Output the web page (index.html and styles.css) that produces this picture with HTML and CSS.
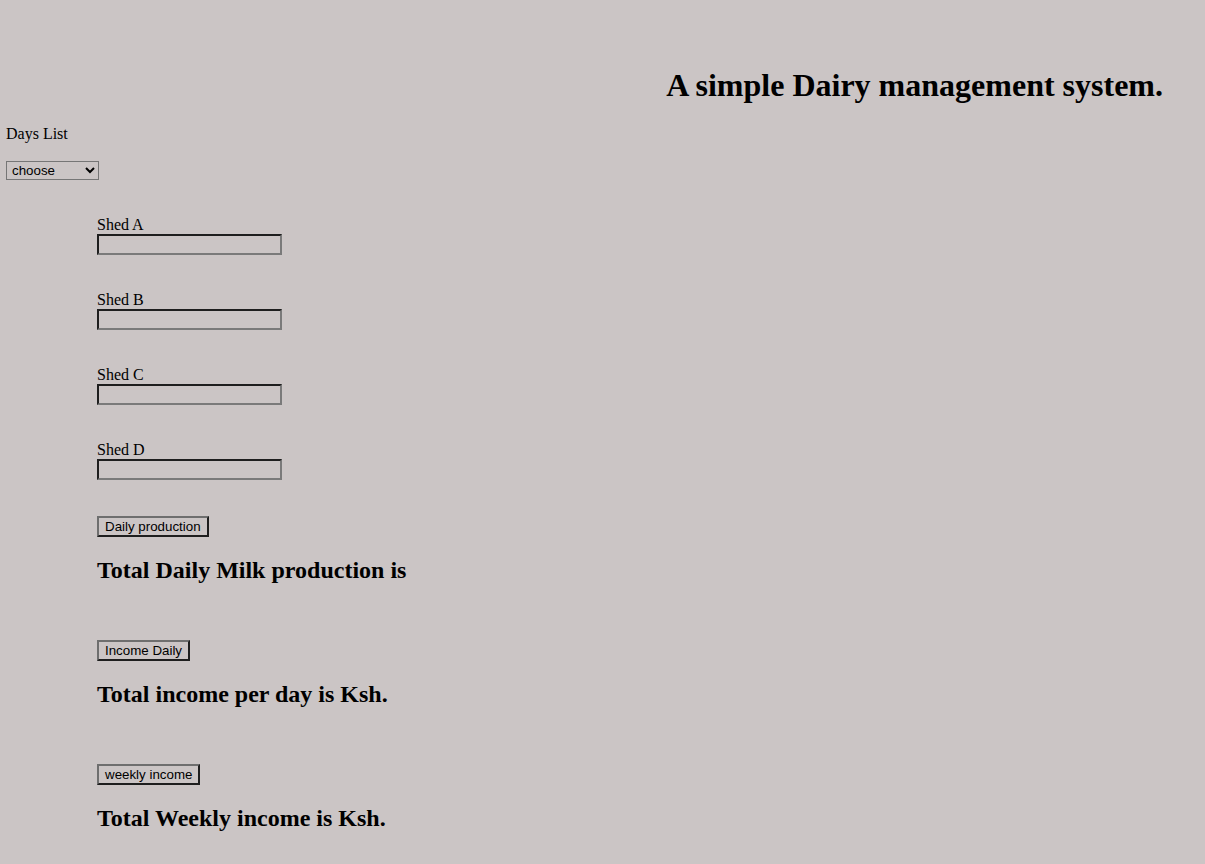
FILE: index.html
```html
<!DOCTYPE html>
<html>
<head>
<meta charset="utf-8">
<title>Dairy management</title>
<link rel="stylesheet" href="styles.css">
</head>
<body>
<header class="header">
  <h1 class="title">A simple Dairy management system.</h1>
</header>
<main class="main">
  <p class="days-label">Days List</p>
  <select class="days-select">
    <option>choose</option>
    <option>Monday</option>
    <option>Tuesday</option>
    <option>Wednesday</option>
    <option>Thursday</option>
    <option>Friday</option>
    <option>Saturday</option>
    <option>Sunday</option>
  </select>
  <form class="sheds">
    <div class="shed">
      <label class="shed-label">Shed A</label>
      <input class="shed-input" type="text">
    </div>
    <div class="shed">
      <label class="shed-label">Shed B</label>
      <input class="shed-input" type="text">
    </div>
    <div class="shed">
      <label class="shed-label">Shed C</label>
      <input class="shed-input" type="text">
    </div>
    <div class="shed">
      <label class="shed-label">Shed D</label>
      <input class="shed-input" type="text">
    </div>
    <div class="result first">
      <button class="btn" type="button">Daily production</button>
      <h2 class="total total-first">Total Daily Milk production is</h2>
    </div>
    <div class="result">
      <button class="btn" type="button">Income Daily</button>
      <h2 class="total">Total income per day is Ksh.</h2>
    </div>
    <div class="result">
      <button class="btn" type="button">weekly income</button>
      <h2 class="total">Total Weekly income is Ksh.</h2>
    </div>
  </form>
</main>
</body>
</html>
```
FILE: styles.css
```css
html, body {
  margin: 0;
  padding: 0;
}
body {
  background: #cbc5c5;
  color: #000;
  font-family: "Liberation Serif", "Times New Roman", serif;
  font-size: 16px;
}
.header {
  padding-top: 67px;
}
.title {
  margin: 0;
  text-align: right;
  padding-right: 42px;
  font-size: 32px;
  font-weight: bold;
}
.main {
  display: flex;
  flex-direction: column;
  align-items: flex-start;
}
.days-label {
  margin: 21px 0 0 6px;
}
.days-select {
  margin: 17.6px 0 0 6px;
  width: 93px;
  height: 19px;
  font-family: "Liberation Sans", Arial, sans-serif;
  font-size: 13.33px;
  background: transparent;
  border: 1px solid #767676;
  border-radius: 0;
  color: #000;
  padding: 0 0 0 1px;
}
.sheds {
  margin: 36.5px 0 0 97px;
  display: flex;
  flex-direction: column;
  align-items: flex-start;
}
.shed {
  display: flex;
  flex-direction: column;
  align-items: flex-start;
  margin-bottom: 36px;
}
.shed-label {
  display: block;
}
.shed-input {
  box-sizing: border-box;
  width: 185px;
  height: 21px;
  margin: 0;
  padding: 1px 2px;
  background: transparent;
  border-style: solid;
  border-width: 2px;
  border-color: #1e1e1e #7a7a7a #7a7a7a #1e1e1e;
  font-family: "Liberation Sans", Arial, sans-serif;
  font-size: 13.33px;
}
.result {
  display: flex;
  flex-direction: column;
  align-items: flex-start;
}
.first {
  margin-top: -0.5px;
}
.btn {
  box-sizing: border-box;
  height: 21px;
  margin: 0;
  padding: 1px 6px 1px 6px;
  background: transparent;
  color: #000;
  border-style: solid;
  border-width: 2px;
  border-color: #6e6e6e #1e1e1e #1e1e1e #6e6e6e;
  font-family: "Liberation Sans", Arial, sans-serif;
  font-size: 13.33px;
  line-height: normal;
}
.total {
  margin: 19.9px 0 56.2px 0;
  font-size: 24px;
  font-weight: bold;
}
.total-first {
  margin-top: 20.9px;
  margin-bottom: 55.2px;
}
```
